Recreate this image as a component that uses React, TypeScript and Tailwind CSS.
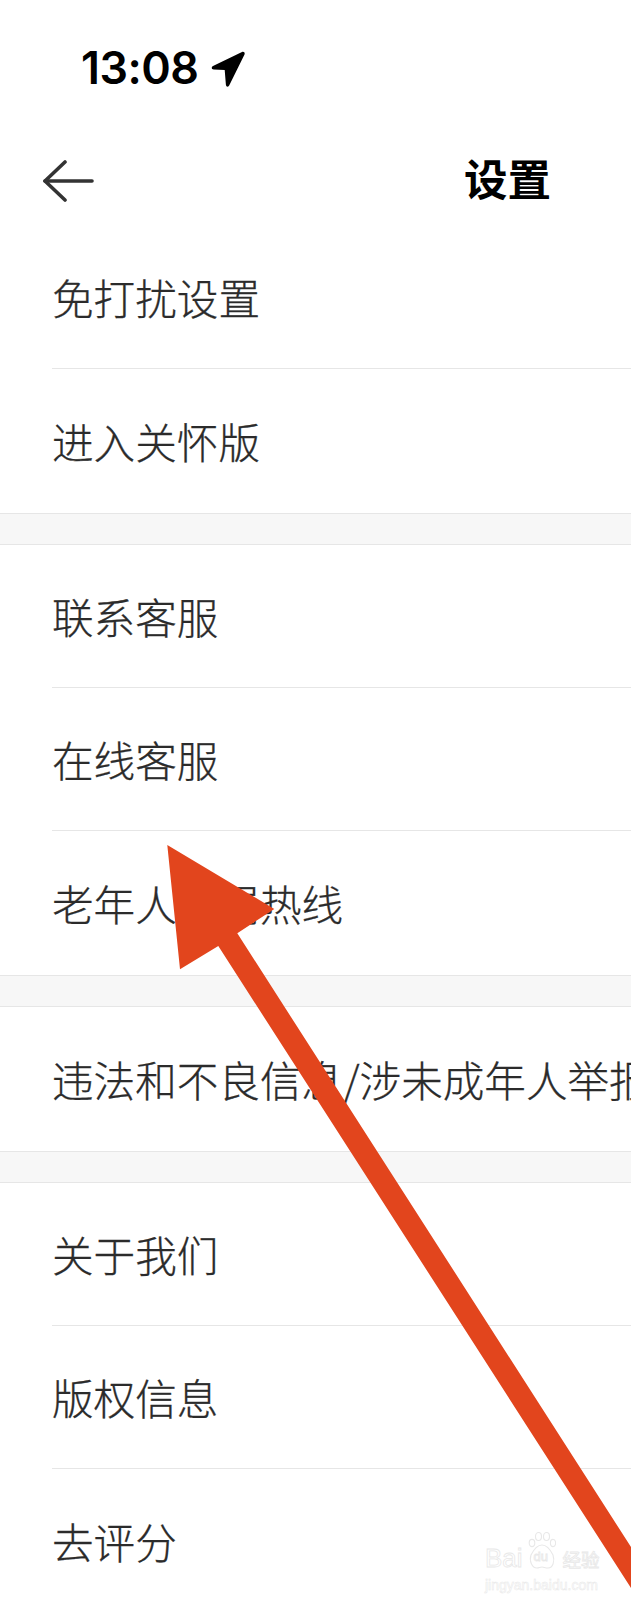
const CJK = "font-['Noto_Sans_CJK_SC','Noto_Sans',sans-serif]";

function Row({ label, last }: { label: string; last?: boolean }) {
  return (
    <div className="pl-[52px]">
      <div className={`flex items-center pt-[2px] whitespace-nowrap text-[41.6px] leading-none font-light text-[#2b2b2b] [-webkit-text-stroke:0.3px_#2b2b2b] ${last ? "h-[143.5px]" : "h-[143px] border-b-[1.5px] border-[#e6e6e6]"}`}>
        {label}
      </div>
    </div>
  );
}

function Band() {
  return <div className="h-[32.5px] bg-[#f7f7f7] border-y-[1.5px] border-[#e6e6e6]" />;
}

function Watermark() {
  return (
    <div className="absolute left-[485px] top-[1532px] flex flex-col text-white font-['Liberation_Sans',sans-serif] [-webkit-text-stroke:0.8px_#e8e8e8]">
      <div className="flex items-end gap-[7px]">
        <span className="text-[26px] leading-[24px]">Bai</span>
        <div className="relative w-[28px] h-[38px] -ml-[2px]">
          <svg className="absolute inset-0" width="28" height="38" viewBox="0 0 28 38" fill="none" stroke="#e8e8e8" strokeWidth="1.1">
            <ellipse cx="4" cy="11" rx="2.8" ry="3.6" />
            <ellipse cx="10.5" cy="4.5" rx="3" ry="4" />
            <ellipse cx="18.5" cy="4.5" rx="3" ry="4" />
            <ellipse cx="25" cy="11" rx="2.6" ry="3.6" />
            <path d="M14 13c-5 0-9 6-11 10-2 6 1 13 6 13 2 0 3-1 5-1s3 1 6 1c5 0 7-7 5-13-2-4-6-10-11-10z" />
          </svg>
          <span className="absolute left-[6px] top-[18px] text-[13px] leading-none">du</span>
        </div>
        <span className="text-[18.5px] leading-[22px] font-['Noto_Sans_CJK_SC',sans-serif]">经验</span>
      </div>
      <span className="mt-[8px] text-[14px] leading-none whitespace-nowrap [-webkit-text-stroke:0.5px_#e8e8e8]">jingyan.baidu.com</span>
    </div>
  );
}

export default function App() {
  return (
    <div className={`relative w-[631px] h-[1600px] overflow-hidden bg-white ${CJK}`}>
      {/* status bar */}
      <div className="h-[136px] pl-[81px] pt-[41px] flex items-start gap-[13px]">
        <span className="text-[44.8px] leading-[54px] font-semibold text-black font-['Inter',sans-serif] tracking-[-0.5px]">13:08</span>
        <svg className="mt-[10px]" width="34" height="36" viewBox="0 0 34 36">
          <path d="M31 1 2 15c-2 1-1.5 3.4.7 3.5l11 .6 1.2 14.6c.2 2.3 2.6 2.6 3.4.6L33.5 3.5C34.2 1.6 32.8.2 31 1z" fill="#000" />
        </svg>
      </div>

      {/* nav */}
      <div className="h-[90px] flex items-center pl-[43px]">
        <svg width="51" height="42" viewBox="0 0 51 42" fill="none" stroke="#333" strokeWidth="3.6" strokeLinecap="round" strokeLinejoin="round">
          <path d="M49 21H2" />
          <path d="M22 2 2 21l20 19" />
        </svg>
        <span className="ml-[370px] -mt-[6px] text-[43.5px] leading-none font-bold text-black">设置</span>
      </div>

      <Row label="免打扰设置" />
      <Row label="进入关怀版" last />
      <Band />
      <Row label="联系客服" />
      <Row label="在线客服" />
      <Row label="老年人专属热线" last />
      <Band />
      <Row label="违法和不良信息/涉未成年人举报" last />
      <Band />
      <Row label="关于我们" />
      <Row label="版权信息" />
      <Row label="去评分" last />

      <Watermark />

      {/* annotation arrow */}
      <svg className="absolute left-0 top-0 pointer-events-none" width="631" height="1600" viewBox="0 0 631 1600">
        <path d="M167.3 845 274.3 909 237.3 933.3 631 1547 631 1588 218.3 946 180 969.3Z" fill="#e2451d" />
      </svg>
    </div>
  );
}
